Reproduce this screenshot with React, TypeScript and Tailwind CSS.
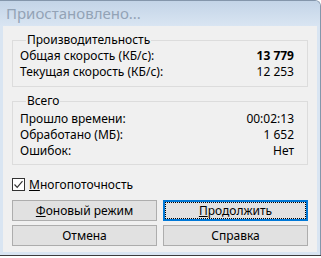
import React from "react";

const font = { fontFamily: '"Noto Sans", "Open Sans", sans-serif' };

function Row({ label, value, bold }: { label: string; value: string; bold?: boolean }) {
  return (
    <div className="flex justify-between h-[16px] items-center leading-[16px]">
      <span>{label}</span>
      <span className={bold ? "font-bold" : ""}>{value}</span>
    </div>
  );
}

function Btn({ children, focused }: { children: React.ReactNode; focused?: boolean }) {
  return (
    <div
      className={
        "h-[21px] flex items-center justify-center bg-[#e1e1e1] " +
        (focused ? "border-2 border-[#0078d7]" : "border border-[#adadad]")
      }
    >
      {focused ? (
        <div className="w-full h-full border border-dotted border-black flex items-center justify-center">
          {children}
        </div>
      ) : (
        children
      )}
    </div>
  );
}

export default function App() {
  return (
    <div
      className="w-[321px] h-[258px] flex flex-col bg-white text-[12px] text-black"
      style={font}
    >
      <div className="h-[255px] flex flex-col bg-[#d9e5f2] rounded-tr-[6px] border-t border-r border-[#8496ab] overflow-hidden">
        <div className="h-[25px] shrink-0 bg-gradient-to-b from-[#c3d4e7] to-[#d9e5f2] flex items-center pl-[6px] pb-[1px]">
          <span className="text-[15px] text-[#93a3b6] leading-none">Приостановлено...</span>
        </div>
        <div className="flex-1 mx-[3px] mr-[3px] mb-[3px] bg-[#f0f0f0] px-[9px] pt-[6px] flex flex-col">
          <fieldset className="border border-[#dcdcdc] pl-[7px] pr-[13px] pb-[6px]">
            <legend className="ml-[6px] px-[1px] leading-[16px]">Производительность</legend>
            <div className="pt-[0px]">
              <Row label="Общая скорость (КБ/с):" value="13 779" bold />
              <Row label="Текущая скорость (КБ/с):" value="12 253" />
            </div>
          </fieldset>
          <fieldset className="border border-[#dcdcdc] pl-[7px] pr-[13px] pb-[5px] mt-[6px]">
            <legend className="ml-[6px] px-[1px] leading-[16px]">Всего</legend>
            <div className="pt-[2px]">
              <Row label="Прошло времени:" value="00:02:13" />
              <Row label="Обработано (МБ):" value="1 652" />
              <Row label="Ошибок:" value="Нет" />
            </div>
          </fieldset>
          <div className="flex items-center mt-[13px] h-[13px]">
            <div className="w-[13px] h-[13px] border border-[#333333] bg-white flex items-center justify-center">
              <svg width="11" height="11" viewBox="0 0 11 11">
                <path d="M1.5 5.5 L4.2 8.3 L9.5 2.2" fill="none" stroke="#333" strokeWidth="1.2" />
              </svg>
            </div>
            <span className="ml-[4px]">
              <span className="underline">М</span>ногопоточность
            </span>
          </div>
          <div className="grid grid-cols-2 gap-x-[6px] gap-y-[4px] mt-[9px]">
            <Btn>
              <span>
                <span className="underline">Ф</span>оновый режим
              </span>
            </Btn>
            <Btn focused>
              <span>
                <span className="underline">П</span>родолжить
              </span>
            </Btn>
            <Btn>Отмена</Btn>
            <Btn>Справка</Btn>
          </div>
        </div>
      </div>
      <div className="h-[1px] bg-[#3c3c3c]" />
      <div className="flex-1 bg-white" />
    </div>
  );
}
